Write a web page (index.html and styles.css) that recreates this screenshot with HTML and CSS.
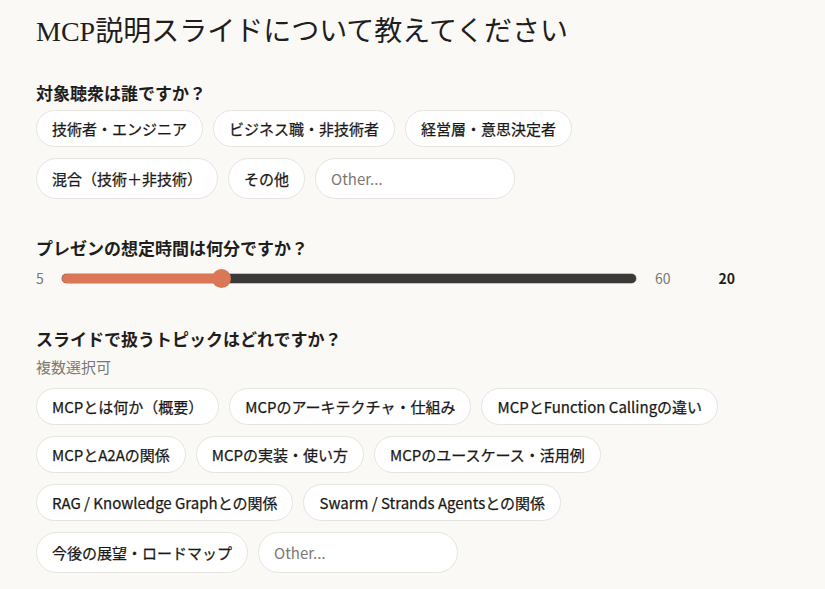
FILE: index.html
```html
<!DOCTYPE html>
<html lang="ja">
<head>
<meta charset="utf-8">
<link rel="stylesheet" href="styles.css">
</head>
<body>
<main class="page">
  <h1 class="title">MCP説明スライドについて教えてください</h1>

  <section class="q q-first">
    <h2 class="q-title">対象聴衆は誰ですか？</h2>
    <div class="chips">
      <button class="chip">技術者・エンジニア</button>
      <button class="chip">ビジネス職・非技術者</button>
      <button class="chip">経営層・意思決定者</button>
      <button class="chip">混合（技術＋非技術）</button>
      <button class="chip">その他</button>
      <input class="other" type="text" placeholder="Other...">
    </div>
  </section>

  <section class="q q-slider">
    <h2 class="q-title">プレゼンの想定時間は何分ですか？</h2>
    <div class="slider-row">
      <span class="lim">5</span>
      <div class="track"><div class="fill" style="width: 27.8%"></div><div class="thumb" style="left: 27.8%"></div></div>
      <span class="lim lim-max">60</span>
      <span class="val">20</span>
    </div>
  </section>

  <section class="q q-topics">
    <h2 class="q-title">スライドで扱うトピックはどれですか？</h2>
    <p class="hint">複数選択可</p>
    <div class="chips">
      <button class="chip">MCPとは何か（概要）</button>
      <button class="chip">MCPのアーキテクチャ・仕組み</button>
      <button class="chip">MCPとFunction Callingの違い</button>
      <button class="chip">MCPとA2Aの関係</button>
      <button class="chip">MCPの実装・使い方</button>
      <button class="chip">MCPのユースケース・活用例</button>
      <button class="chip">RAG / Knowledge Graphとの関係</button>
      <button class="chip">Swarm / Strands Agentsとの関係</button>
      <button class="chip">今後の展望・ロードマップ</button>
      <input class="other" type="text" placeholder="Other...">
    </div>
  </section>
</main>
</body>
</html>
```
FILE: styles.css
```css
html, body {
  margin: 0;
  padding: 0;
  background: #faf9f6;
}
body {
  font-family: "Noto Sans CJK JP", "Noto Sans", sans-serif;
  color: #1f1e1d;
}
.page {
  padding: 12px 36px 0 36px;
  width: 740px;
}
.title {
  font-family: "Liberation Serif", "Noto Sans CJK JP", serif;
  font-weight: 400;
  font-size: 28px;
  line-height: 40px;
  margin: 0;
  color: #1f1e1d;
}
.q-title {
  font-size: 17px;
  font-weight: 700;
  line-height: 24px;
  margin: 0 0 5px 0;
  color: #1f1e1d;
}
.q-first { margin-top: 29px; }
.chips {
  display: flex;
  flex-wrap: wrap;
  gap: 11px 10px;
  align-items: stretch;
  max-width: 700px;
}
.chip {
  font-family: inherit;
  font-size: 15px;
  font-weight: 400;
  line-height: 21px;
  color: #1a1918;
  -webkit-text-stroke: 0.25px #1a1918;
  background: #ffffff;
  border: 1px solid #e6e4df;
  border-radius: 999px;
  padding: 7px 15px;
  margin: 0;
  cursor: pointer;
}
.other {
  font-family: inherit;
  font-size: 15px;
  font-weight: 400;
  line-height: 21px;
  color: #1f1e1d;
  background: #ffffff;
  border: 1px solid #e6e4df;
  border-radius: 999px;
  padding: 9px 15px;
  width: 168px;
  margin: 0;
  outline: none;
}
.other::placeholder { color: #7a7873; }

.q-slider { margin-top: 37px; }
.q-slider .q-title { margin-bottom: 6px; }
.slider-row {
  display: flex;
  align-items: center;
  height: 24px;
}
.lim {
  font-size: 14px;
  color: #7a7873;
  width: 26px;
}
.lim-max { width: auto; margin-left: 19px; }
.track {
  position: relative;
  width: 574px;
  height: 9px;
  border-radius: 5px;
  background: #3a3937;
  box-shadow: 0 0 0 0.5px #8a8985;
}
.fill {
  height: 100%;
  border-radius: 5px;
  background: #d97757;
}
.thumb {
  position: absolute;
  top: 50%;
  width: 19px;
  height: 19px;
  margin: -9.5px 0 0 -9.5px;
  border-radius: 50%;
  background: #d97757;
}
.val {
  font-size: 14px;
  font-weight: 700;
  margin-left: 48px;
}
.q-topics { margin-top: 37px; }
.hint {
  font-size: 15px;
  color: #7a7873;
  margin: 0 0 10px 0;
  line-height: 22px;
}
```
